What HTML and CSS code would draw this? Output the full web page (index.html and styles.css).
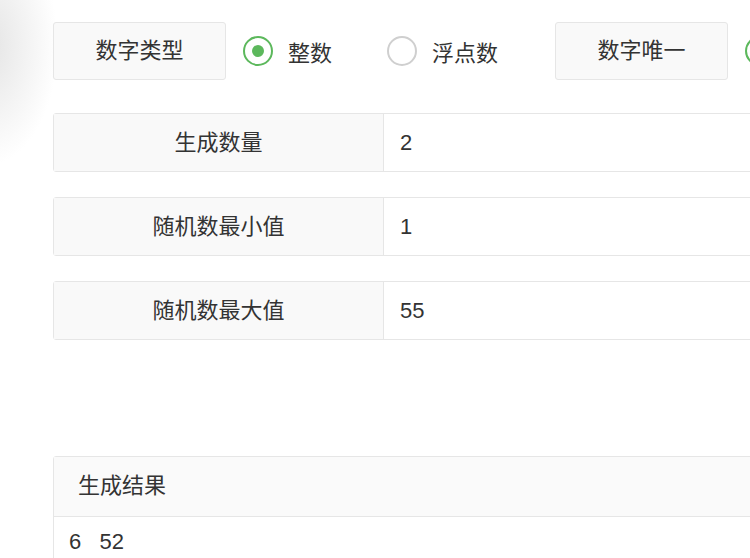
FILE: index.html
```html
<!DOCTYPE html>
<html lang="zh-CN">
  <head>
    <meta charset="UTF-8" />
    <meta name="viewport" content="width=device-width, initial-scale=1.0" />
    <title>随机数生成</title>
    <link rel="stylesheet" href="styles.css">
  </head>
  <body>
    <div class="container">
      <div class="option-bar">
        <div class="option-label">数字类型</div>
        <div class="radio-group">
          <label class="radio checked"><span class="radio-dot"></span>整数</label>
          <label class="radio"><span class="radio-dot"></span>浮点数</label>
        </div>
        <div class="option-label">数字唯一</div>
        <div class="radio-group">
          <label class="radio checked"><span class="radio-dot"></span>是</label>
          <label class="radio"><span class="radio-dot"></span>否</label>
        </div>
      </div>

      <div class="field">
        <div class="field-label">生成数量</div>
        <div class="field-value">2</div>
      </div>
      <div class="field">
        <div class="field-label">随机数最小值</div>
        <div class="field-value">1</div>
      </div>
      <div class="field">
        <div class="field-label">随机数最大值</div>
        <div class="field-value">55</div>
      </div>

      <div class="panel">
        <div class="panel-heading">生成结果</div>
        <div class="panel-body">6&nbsp;&nbsp;&nbsp;52</div>
      </div>
    </div>
  </body>
</html>
```

FILE: styles.css
```css
* {
  margin: 0;
  padding: 0;
  box-sizing: border-box;
  font-family: "Liberation Sans", "Noto Sans CJK SC", sans-serif;
}

html,
body {
  height: 100%;
}

body {
  overflow: hidden;
  color: #333;
  font-size: 22px;
  background: #fff radial-gradient(ellipse 70px 120px at -12px 45px, #e4e4e4, #fff);
}

.container {
  width: 1100px;
  padding: 22px 0 0 53px;
}

.option-bar {
  display: flex;
  align-items: center;
  margin-bottom: 33px;
}

.option-label {
  width: 173px;
  height: 58px;
  line-height: 56px;
  text-align: center;
  background-color: #f9f9f9;
  border: 1px solid #e6e6e6;
  border-radius: 3px;
}

.radio-group {
  display: flex;
  align-items: center;
  gap: 55px;
  margin: 0 57px 0 17px;
}

.radio {
  display: flex;
  align-items: center;
  gap: 15px;
  cursor: pointer;
}

.radio-dot {
  width: 30px;
  height: 30px;
  border: 2px solid #cfcfcf;
  border-radius: 50%;
  display: flex;
  align-items: center;
  justify-content: center;
}

.radio.checked .radio-dot {
  border-color: #5cb85c;
}

.radio.checked .radio-dot::after {
  content: "";
  width: 12px;
  height: 12px;
  border-radius: 50%;
  background-color: #5cb85c;
}

.field {
  display: flex;
  height: 59px;
  margin-bottom: 25px;
  border: 1px solid #e6e6e6;
  border-radius: 3px;
}

.field-label {
  width: 330px;
  line-height: 57px;
  text-align: center;
  background-color: #f9f9f9;
  border-right: 1px solid #e6e6e6;
}

.field-value {
  flex: 1;
  line-height: 57px;
  padding-left: 16px;
}

.panel {
  margin-top: 116px;
  border: 1px solid #e6e6e6;
  border-radius: 3px;
}

.panel-heading {
  height: 60px;
  line-height: 58px;
  padding-left: 24px;
  background-color: #fafafa;
  border-bottom: 1px solid #e6e6e6;
}

.panel-body {
  min-height: 120px;
  padding: 11px 15px;
  line-height: 28px;
}
```
